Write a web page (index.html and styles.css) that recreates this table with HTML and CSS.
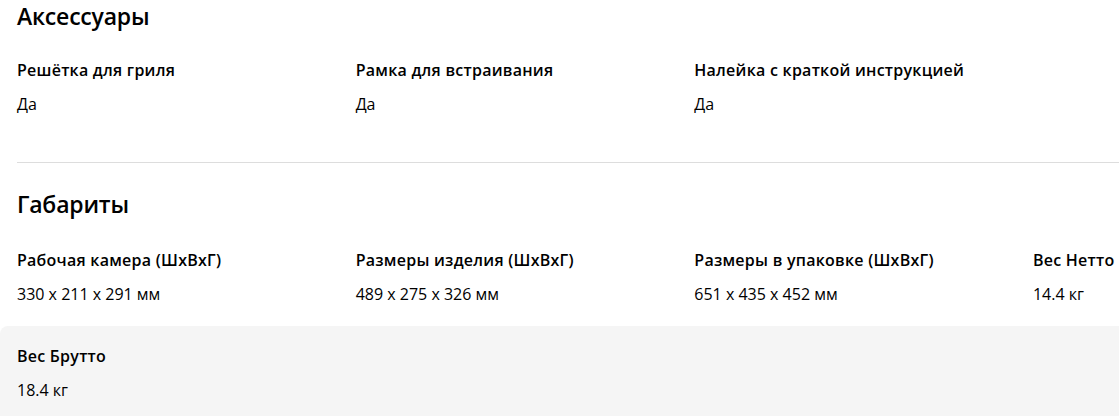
FILE: index.html
```html
<!DOCTYPE html>
<html lang="ru">
<head>
<meta charset="utf-8">
<title>Характеристики</title>
<link rel="stylesheet" href="styles.css">
</head>
<body>
<div class="specs">
  <section class="group">
    <h2 class="group-title">Аксессуары</h2>
    <div class="grid grid-first">
      <div class="item"><div class="label">Решётка для гриля</div><div class="value">Да</div></div>
      <div class="item"><div class="label">Рамка для встраивания</div><div class="value">Да</div></div>
      <div class="item"><div class="label">Налейка с краткой инструкцией</div><div class="value">Да</div></div>
    </div>
  </section>
  <hr class="divider">
  <section class="group">
    <h2 class="group-title title-second">Габариты</h2>
    <div class="grid">
      <div class="item"><div class="label">Рабочая камера (ШхВхГ)</div><div class="value">330 x 211 x 291 мм</div></div>
      <div class="item"><div class="label">Размеры изделия (ШхВхГ)</div><div class="value">489 x 275 x 326 мм</div></div>
      <div class="item"><div class="label">Размеры в упаковке (ШхВхГ)</div><div class="value">651 x 435 x 452 мм</div></div>
      <div class="item"><div class="label">Вес Нетто</div><div class="value">14.4 кг</div></div>
    </div>
    <div class="grid grid-shaded">
      <div class="item"><div class="label">Вес Брутто</div><div class="value">18.4 кг</div></div>
    </div>
  </section>
</div>
</body>
</html>
```
FILE: styles.css
```css
html, body {
  margin: 0;
  padding: 0;
  background: #ffffff;
  overflow: hidden;
}

body {
  font-family: "Open Sans", "Noto Sans", "Liberation Sans", sans-serif;
  color: #000000;
}

.specs {
  width: 1119px;
  overflow: hidden;
}

.group-title {
  margin: 0;
  padding-left: 17px;
  font-size: 23px;
  line-height: 32px;
  font-weight: 600;
  letter-spacing: -0.2px;
}

.title-second {
  margin-top: 25px;
}

.grid {
  display: grid;
  grid-template-columns: repeat(3, 338.67px) 1fr;
  margin-top: 10px;
}

.grid-first {
  margin-top: 8px;
}

.item {
  padding: 18px 17px;
  white-space: nowrap;
  min-width: 0;
}

.label {
  font-size: 16px;
  line-height: 24px;
  font-weight: 600;
  letter-spacing: 0.25px;
}

.value {
  margin-top: 10px;
  font-size: 16px;
  line-height: 24px;
  font-weight: 400;
  letter-spacing: 0;
}

.divider {
  margin: 28px 0 0 17px;
  border: 0;
  border-top: 1px solid #dddddd;
  height: 0;
}

.grid-shaded {
  margin-top: 2px;
  background: #f5f5f5;
  border-top-left-radius: 8px;
}
```
